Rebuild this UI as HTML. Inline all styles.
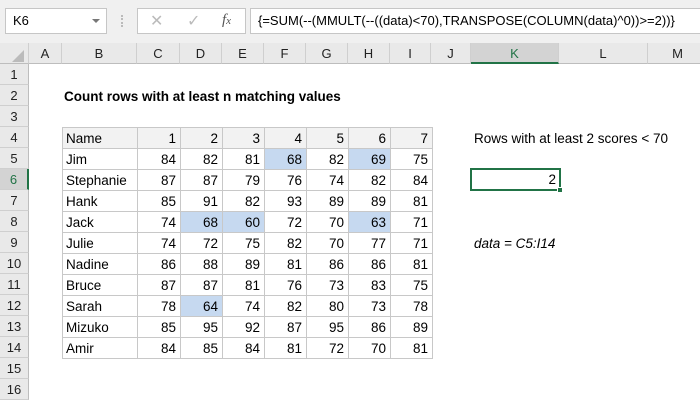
<!DOCTYPE html>
<html><head><style>
*{margin:0;padding:0;box-sizing:border-box}
body{width:700px;height:400px;overflow:hidden;background:#fff;font-family:"Liberation Sans",sans-serif;font-size:13px;color:#000;position:relative}
.a{position:absolute}
.top{left:0;top:0;width:700px;height:43px;background:#f0f0f0}
.box{background:#fff;border:1px solid #c6c6c6}
.ch{top:43px;height:21px;background:#e9e9e9;border-right:1px solid #cfcfcf;border-bottom:1px solid #bdbdbd;text-align:center;line-height:21px;font-size:13px;color:#222}
.rh{left:0;width:29px;height:21px;background:#e9e9e9;border-bottom:1px solid #cfcfcf;border-right:1px solid #bdbdbd;text-align:center;line-height:21px;color:#222}
table{position:absolute;left:62px;top:127px;border-collapse:collapse;table-layout:fixed}
td{border:1px solid #c8c8c8;height:21px;padding:0 4px 0 3px;text-align:right;line-height:19px;font-size:13.5px;white-space:nowrap}
td:first-child{text-align:left}
tr.h td{background:#f2f2f2}
td.b{background:#c6d9f0}
</style></head><body>
<div class="a top"></div>
<div class="a box" style="left:5px;top:8px;width:102px;height:26px;padding-left:7px;line-height:24px;font-size:13px">K6</div>
<div class="a" style="left:92px;top:19px;width:0;height:0;border-left:4px solid transparent;border-right:4px solid transparent;border-top:4px solid #777"></div>
<div class="a" style="left:121px;top:15px;width:2px;height:12px;border-left:2px dotted #bbb"></div>
<div class="a box" style="left:137px;top:8px;width:109px;height:26px"></div>
<div class="a" style="left:150px;top:11px;color:#bbb;font-size:16px">✕</div>
<div class="a" style="left:187px;top:11px;color:#bbb;font-size:16px">✓</div>
<div class="a" style="left:222px;top:12px;color:#555;font-family:'Liberation Serif',serif;font-style:italic;font-size:15px">f<span style="font-size:11px">x</span></div>
<div class="a box" style="left:250px;top:8px;width:452px;height:26px;padding-left:7px;line-height:24px;font-size:13px">{=SUM(--(MMULT(--((data)&lt;70),TRANSPOSE(COLUMN(data)^0))&gt;=2))}</div>

<div class="a ch" style="left:0;width:29px"></div>
<div class="a" style="left:12px;top:50px;width:0;height:0;border-left:12px solid transparent;border-bottom:12px solid #bbb"></div>
<div class="a ch" style="left:29px;width:33px">A</div>
<div class="a ch" style="left:62px;width:75px">B</div>
<div class="a ch" style="left:137px;width:43px">C</div>
<div class="a ch" style="left:180px;width:42px">D</div>
<div class="a ch" style="left:222px;width:42px">E</div>
<div class="a ch" style="left:264px;width:42px">F</div>
<div class="a ch" style="left:306px;width:42px">G</div>
<div class="a ch" style="left:348px;width:42px">H</div>
<div class="a ch" style="left:390px;width:41px">I</div>
<div class="a ch" style="left:431px;width:40px">J</div>
<div class="a ch" style="left:471px;width:88px;background:#d3d3d3;border-bottom:2px solid #217346;color:#217346">K</div>
<div class="a ch" style="left:559px;width:89px">L</div>
<div class="a ch" style="left:648px;width:60px">M</div>

<div class="a rh" style="top:64px">1</div>
<div class="a rh" style="top:85px">2</div>
<div class="a rh" style="top:106px">3</div>
<div class="a rh" style="top:127px">4</div>
<div class="a rh" style="top:148px">5</div>
<div class="a rh" style="top:169px;background:#d3d3d3;border-right:2px solid #217346;color:#217346">6</div>
<div class="a rh" style="top:190px">7</div>
<div class="a rh" style="top:211px">8</div>
<div class="a rh" style="top:232px">9</div>
<div class="a rh" style="top:253px">10</div>
<div class="a rh" style="top:274px">11</div>
<div class="a rh" style="top:295px">12</div>
<div class="a rh" style="top:316px">13</div>
<div class="a rh" style="top:337px">14</div>
<div class="a rh" style="top:358px">15</div>
<div class="a rh" style="top:379px">16</div>

<div class="a" style="left:64px;top:89px;font-weight:bold;font-size:13.5px">Count rows with at least n matching values</div>

<table>
<colgroup><col style="width:75px"><col style="width:43px"><col style="width:42px"><col style="width:42px"><col style="width:42px"><col style="width:42px"><col style="width:42px"><col style="width:42px"><col style="width:41px"></colgroup>
<tr class="h"><td>Name</td><td>1</td><td>2</td><td>3</td><td>4</td><td>5</td><td>6</td><td>7</td></tr>
<tr><td>Jim</td><td>84</td><td>82</td><td>81</td><td class="b">68</td><td>82</td><td class="b">69</td><td>75</td></tr>
<tr><td>Stephanie</td><td>87</td><td>87</td><td>79</td><td>76</td><td>74</td><td>82</td><td>84</td></tr>
<tr><td>Hank</td><td>85</td><td>91</td><td>82</td><td>93</td><td>89</td><td>89</td><td>81</td></tr>
<tr><td>Jack</td><td>74</td><td class="b">68</td><td class="b">60</td><td>72</td><td>70</td><td class="b">63</td><td>71</td></tr>
<tr><td>Julie</td><td>74</td><td>72</td><td>75</td><td>82</td><td>70</td><td>77</td><td>71</td></tr>
<tr><td>Nadine</td><td>86</td><td>88</td><td>89</td><td>81</td><td>86</td><td>86</td><td>81</td></tr>
<tr><td>Bruce</td><td>87</td><td>87</td><td>81</td><td>76</td><td>73</td><td>83</td><td>75</td></tr>
<tr><td>Sarah</td><td>78</td><td class="b">64</td><td>74</td><td>82</td><td>80</td><td>73</td><td>78</td></tr>
<tr><td>Mizuko</td><td>85</td><td>95</td><td>92</td><td>87</td><td>95</td><td>86</td><td>89</td></tr>
<tr><td>Amir</td><td>84</td><td>85</td><td>84</td><td>81</td><td>72</td><td>70</td><td>81</td></tr>
</table>

<div class="a" style="left:474px;top:131px;font-size:13.5px">Rows with at least 2 scores &lt; 70</div>
<div class="a" style="left:470px;top:168px;width:91px;height:23px;border:2px solid #217346;text-align:right;padding-right:3px;line-height:19px;font-size:13.5px">2</div>
<div class="a" style="left:557px;top:187px;width:6px;height:6px;background:#217346;border:1px solid #fff"></div>
<div class="a" style="left:474px;top:236px;font-style:italic;font-size:13.5px">data = C5:I14</div>
</body></html>
